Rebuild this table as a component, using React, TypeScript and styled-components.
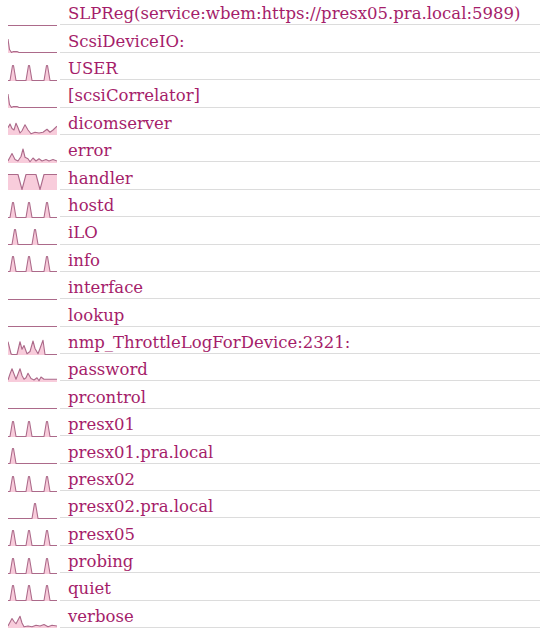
import React from "react";
import styled, { createGlobalStyle } from "styled-components";

const Global = createGlobalStyle`
  html, body { margin: 0; padding: 0; background: #ffffff; }
`;

type Pt = [number, number];

const peak = (c: number): Pt[] => [[c - 3, 0], [c - 0.5, 1], [c + 0.5, 1], [c + 3, 0]];
const three: Pt[] = [[0, 0], ...peak(5), ...peak(21), ...peak(39), [49, 0]];
const flat: Pt[] = [[0, 0], [49, 0]];
const dropStart: Pt[] = [[0, 0.9], [1.5, 0.2], [3.5, 0], [5, 0.06], [9, 0.06], [11, 0], [49, 0]];

const rows: { label: string; data: Pt[] }[] = [
  { label: "SLPReg(service:wbem:https://presx05.pra.local:5989)", data: flat },
  { label: "ScsiDeviceIO:", data: dropStart },
  { label: "USER", data: three },
  { label: "[scsiCorrelator]", data: dropStart },
  {
    label: "dicomserver",
    data: [
      [0, 0.45], [2, 0.7], [4, 0.4], [6, 0.3], [8, 0.75], [10, 0.45], [12, 0.1], [14, 0.25],
      [17, 0.65], [20, 0.3], [23, 0.05], [27, 0.15], [31, 0.1], [35, 0.15], [39, 0.35], [42, 0.15],
      [45, 0.3], [49, 0.55],
    ],
  },
  {
    label: "error",
    data: [
      [0, 0.1], [2, 0.35], [4, 0.6], [7, 0.2], [10, 0.1], [13, 0.4], [15, 0.9], [17, 0.35],
      [20, 0.25], [22, 0.05], [25, 0.3], [28, 0.1], [31, 0.25], [34, 0.1], [38, 0.2], [41, 0.1],
      [45, 0.2], [49, 0.1],
    ],
  },
  {
    label: "handler",
    data: [[0, 1], [10, 1], [14, 0], [18, 1], [28, 1], [32, 0], [36, 1], [49, 1]],
  },
  { label: "hostd", data: three },
  { label: "iLO", data: [[0, 0], ...peak(7), ...peak(27), [49, 0]] },
  { label: "info", data: three },
  { label: "interface", data: flat },
  { label: "lookup", data: flat },
  {
    label: "nmp_ThrottleLogForDevice:2321:",
    data: [
      [0, 0.85], [3, 0.05], [4, 0], [9, 0], [12, 0.85], [14, 0.35], [16, 0.6], [19, 0.05],
      [22, 0.2], [25, 0.9], [27, 0.4], [30, 0.05], [32, 0.4], [35, 0.95], [37, 0], [49, 0],
    ],
  },
  {
    label: "password",
    data: [
      [0, 0.1], [2, 0.5], [4, 0.85], [6, 0.5], [8, 0.15], [10, 0.5], [12, 0.85], [14, 0.4],
      [16, 0.15], [18, 0.25], [20, 0.55], [23, 0.2], [26, 0.1], [29, 0.25], [31, 0.05], [33, 0.3],
      [36, 0.15], [49, 0.15],
    ],
  },
  { label: "prcontrol", data: flat },
  { label: "presx01", data: three },
  { label: "presx01.pra.local", data: [[0, 0], ...peak(5), [49, 0]] },
  { label: "presx02", data: three },
  { label: "presx02.pra.local", data: [[0, 0], ...peak(27), [49, 0]] },
  { label: "presx05", data: three },
  { label: "probing", data: three },
  { label: "quiet", data: three },
  {
    label: "verbose",
    data: [
      [0, 0.1], [2, 0.35], [4, 0.6], [6, 0.4], [8, 0.25], [10, 0.5], [12, 0.75], [14, 0.3],
      [16, 0.05], [20, 0.1], [24, 0.05], [28, 0.15], [32, 0.1], [36, 0.2], [40, 0.05], [44, 0.15],
      [49, 0.1],
    ],
  },
];

const List = styled.div`
  margin-top: -2px;
  width: 540px;
`;

const Row = styled.div`
  display: flex;
  align-items: stretch;
  height: 27.4px;
`;

const SparkCell = styled.div`
  width: 49px;
  margin-left: 8px;
  margin-right: 3px;
  display: flex;
  align-items: flex-end;
  flex: none;
`;

const Label = styled.div`
  flex: 1;
  display: flex;
  align-items: flex-end;
  border-bottom: 1px solid #dcdcdc;
  padding-left: 8px;
  padding-bottom: 1px;
  font-family: "DejaVu Serif", "Liberation Serif", serif;
  font-size: 16.5px;
  line-height: 1.1;
  color: #a51d6a;
  white-space: nowrap;
`;

const H = 17;
const Spark: React.FC<{ data: Pt[] }> = ({ data }) => {
  const y = (v: number) => (H - 0.5 - v * 15).toFixed(2);
  const line = data.map(([x, v], i) => `${i ? "L" : "M"}${x} ${y(v)}`).join(" ");
  const area = `${line} L49 ${H} L0 ${H} Z`;
  return (
    <svg width="49" height={H} viewBox={`0 0 49 ${H}`} style={{ display: "block", marginBottom: -0.5 }}>
      <path d={area} fill="#f8ccdb" />
      <path d={line} fill="none" stroke="#ac6a8a" strokeWidth="1.1" strokeLinejoin="round" />
    </svg>
  );
};

export default function App() {
  return (
    <>
      <Global />
      <List>
        {rows.map((r) => (
          <Row key={r.label}>
            <SparkCell>
              <Spark data={r.data} />
            </SparkCell>
            <Label>{r.label}</Label>
          </Row>
        ))}
      </List>
    </>
  );
}
